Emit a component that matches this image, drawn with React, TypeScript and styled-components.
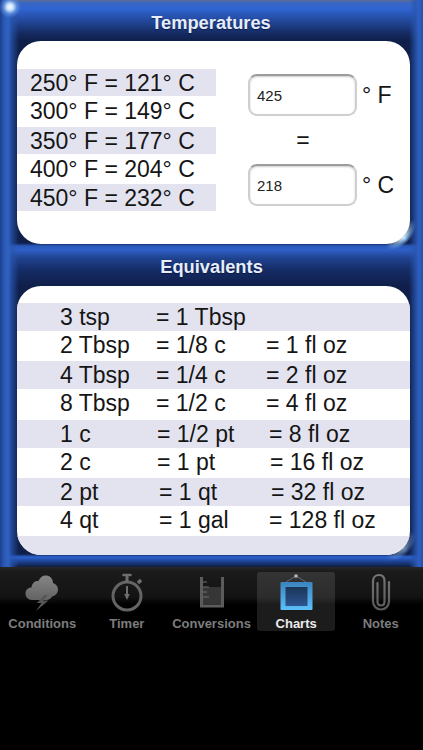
import React from "react";
import styled, {createGlobalStyle} from "styled-components";

const temps = ["250° F = 121° C", "300° F = 149° C", "350° F = 177° C", "400° F = 204° C", "450° F = 232° C"];

const equivalents = [
    {a: "3 tsp", b: "= 1 Tbsp", c: "", second: 96, third: 110},
    {a: "2 Tbsp", b: "= 1/8 c", c: "= 1 fl oz", second: 96, third: 110},
    {a: "4 Tbsp", b: "= 1/4 c", c: "= 2 fl oz", second: 96, third: 110},
    {a: "8 Tbsp", b: "= 1/2 c", c: "= 4 fl oz", second: 96, third: 110},
    {a: "1 c", b: "= 1/2 pt", c: "= 8 fl oz", second: 97, third: 112},
    {a: "2 c", b: "= 1 pt", c: "= 16 fl oz", second: 97, third: 113},
    {a: "2 pt", b: "= 1 qt", c: "= 32 fl oz", second: 99, third: 112},
    {a: "4 qt", b: "= 1 gal", c: "= 128 fl oz", second: 99, third: 110},
];

const ConditionsIcon = () => (
    <svg width="36" height="40" viewBox="0 0 36 40">
        <defs>
            <linearGradient id="cloudFill" x1="0" y1="0" x2="0" y2="1">
                <stop offset="0" stopColor="#868686"/>
                <stop offset="1" stopColor="#636363"/>
            </linearGradient>
        </defs>
        <path fill="url(#cloudFill)" d="M8 28c-4 0-6.500-3-6.500-6.500S4 15.500 7.500 15.500C8 11 11 8.500 14.500 9 16 5 19 3 22.500 3.500c4 .5 6.500 3.500 6.500 7.500 3 .8 5 3.500 5 6.500 0 4-2.800 6.500-6 7-1 2-3 3.500-5.500 3.500z"/>
        <path fill="#565656" d="M20.500 23l-7.500 8h4.500l-5.500 8 12.500-10.500h-5.500l5-5.500z"/>
    </svg>
);

const TimerIcon = () => (
    <svg width="36" height="40" viewBox="0 0 36 40" fill="none">
        <circle cx="18" cy="24" r="14" stroke="#646464" strokeWidth="3"/>
        <path d="M14.500 3h7" stroke="#6e6e6e" strokeWidth="2.500" strokeLinecap="round"/>
        <path d="M18 3v7" stroke="#6e6e6e" strokeWidth="3"/>
        <path d="M29 11l3-3" stroke="#6e6e6e" strokeWidth="3.500"/>
        <path d="M18 14v9" stroke="#6e6e6e" strokeWidth="2"/>
        <path d="M15.200 22h5.600L18 28z" fill="#6e6e6e"/>
    </svg>
);

const BeakerIcon = () => (
    <svg width="30" height="36" viewBox="0 0 30 36" fill="none">
        <path d="M4.500 3v29h21V3" stroke="#5c5c5c" strokeWidth="3"/>
        <path d="M6 13h18v17.500H6z" fill="#363636"/>
        <path d="M6 8h4M6 13h6M6 18h4M6 23h6" stroke="#6e6e6e" strokeWidth="1"/>
    </svg>
);

const FrameIcon = () => (
    <svg width="36" height="40" viewBox="0 0 36 40" fill="none">
        <defs>
            <linearGradient id="frameFill" x1="0" y1="0" x2="0" y2="1">
                <stop offset="0" stopColor="#1b3557"/>
                <stop offset="1" stopColor="#2c5590"/>
            </linearGradient>
            <linearGradient id="frameEdge" x1="0" y1="0" x2="0" y2="1">
                <stop offset="0" stopColor="#3b84bf"/>
                <stop offset="1" stopColor="#5cc0fa"/>
            </linearGradient>
        </defs>
        <path d="M18 4L8 10M18 4l10 6" stroke="#5f6d7c" strokeWidth="1"/>
        <circle cx="18" cy="4" r="1.800" fill="#b8b8b8"/>
        <rect x="2.500" y="10" width="32" height="28" rx="1" fill="url(#frameEdge)"/>
        <rect x="7.500" y="15" width="22" height="19" fill="url(#frameFill)"/>
    </svg>
);

const ClipIcon = () => (
    <svg width="24" height="38" viewBox="0 0 24 38" fill="none">
        <defs>
            <linearGradient id="clipStroke" x1="0" y1="0" x2="0" y2="1">
                <stop offset="0" stopColor="#777"/>
                <stop offset="1" stopColor="#585858"/>
            </linearGradient>
        </defs>
        <path d="M8.500 10v19c0 2.200 1.500 3.500 3.500 3.500s3.500-1.300 3.500-3.500V8c0-3.500-2-6-5.500-6S4 4.500 4 8v20c0 5 3.500 8.500 8 8.500s8-3.500 8-8.500V9" stroke="url(#clipStroke)" strokeWidth="2.200" strokeLinecap="round"/>
    </svg>
);

const tabs = [
    {label: "Conditions", icon: <ConditionsIcon/>},
    {label: "Timer", icon: <TimerIcon/>},
    {label: "Conversions", icon: <BeakerIcon/>},
    {label: "Charts", icon: <FrameIcon/>, active: true},
    {label: "Notes", icon: <ClipIcon/>},
];

export default function App() {
    return (
        <Screen>
            <GlobalStyle/>
            <Frame>
                <Glint/>
                <Section>
                    <SectionTitle>Temperatures</SectionTitle>
                    <TempPanel>
                        <TempList>
                            {temps.map((t) => <TempRow key={t}>{t}</TempRow>)}
                        </TempList>
                        <Converter>
                            <ConvertRow>
                                <TempInput readOnly value="425"/>
                                <Unit>° F</Unit>
                            </ConvertRow>
                            <EqualSign>=</EqualSign>
                            <ConvertRow>
                                <TempInput readOnly value="218"/>
                                <Unit>° C</Unit>
                            </ConvertRow>
                        </Converter>
                    </TempPanel>
                    <CornerGlint/>
                </Section>
                <Section>
                    <SectionTitle>Equivalents</SectionTitle>
                    <EquivPanel>
                        {equivalents.map((e) => (
                            <EquivRow key={e.a} $second={e.second} $third={e.third}>
                                <span>{e.a}</span>
                                <span>{e.b}</span>
                                <span>{e.c}</span>
                            </EquivRow>
                        ))}
                        <EquivFiller/>
                    </EquivPanel>
                    <CornerGlint $dim/>
                </Section>
            </Frame>
            <TabBar>
                {tabs.map((tab) => (
                    <Tab key={tab.label} $active={tab.active}>
                        <TabIcon>{tab.icon}</TabIcon>
                        <TabLabel $active={tab.active}>{tab.label}</TabLabel>
                    </Tab>
                ))}
            </TabBar>
        </Screen>
    );
}

const GlobalStyle = createGlobalStyle`
  html, body {
    margin: 0;
    padding: 0;
    background: #000;
  }
  body {
    font-family: "Liberation Sans", Arial, sans-serif;
  }
`;

const Screen = styled.div`
  width: 423px;
  height: 750px;
  overflow: hidden;
  background: #000;
`;

const Frame = styled.div`
  position: relative;
  height: 567px;
  box-sizing: border-box;
  padding: 0 13px 12px 17px;
  display: flex;
  flex-direction: column;
  background:
    linear-gradient(90deg, #1b3f8c 0, #2a58b4 4px, #3063c2 8px, rgba(40, 85, 175, 0.7) 12px, rgba(20, 45, 105, 0) 19px) left top / 19px 100% no-repeat,
    linear-gradient(270deg, #2450a6 0, #2f60c0 4px, rgba(40, 85, 175, 0.75) 8px, rgba(20, 45, 105, 0) 14px) right top / 14px 100% no-repeat,
    linear-gradient(180deg,
      #5d6d93 0, #3a66c4 3px, #2f64d2 9px, #244a9e 20px, #14295e 34px, #0f1f4a 41px,
      #0f1f4a 243px, #2a59bb 246px, #2e5fc6 250px, #1f4390 258px, #152c66 270px, #0f1f4a 286px,
      #0f1f4a 554px, #2d62d0 557px, #1c3f8c 562px, #0f1c3c 567px);
`;

const Glint = styled.div`
  position: absolute;
  left: 0;
  top: 0;
  width: 22px;
  height: 20px;
  background: radial-gradient(circle at 10px 7px, #f4fbff 0, #cfe6fb 3px, rgba(120, 170, 240, 0.5) 7px, rgba(60, 110, 210, 0) 11px);
`;

const Section = styled.section`
  position: relative;
  display: flex;
  flex-direction: column;
`;

const SectionTitle = styled.h2`
  margin: 0;
  height: 41px;
  line-height: 46px;
  text-align: center;
  font-size: 18.300px;
  font-weight: bold;
  color: #e6edf9;
  text-shadow: 0 1px 1px rgba(5, 15, 45, 0.6);
  transform: translateX(-2.500px);

  section + section > & {
    height: 42px;
    line-height: 45px;
    transform: translateX(-2px);
  }
`;

const CornerGlint = styled.div<{$dim?: boolean}>`
  position: absolute;
  right: -8px;
  bottom: -8px;
  width: 32px;
  height: 32px;
  opacity: ${(p) => (p.$dim ? 0.55 : 1)};
  background: radial-gradient(circle at 0 0, rgba(200, 235, 255, 0) 22px, #e4f6ff 24.500px, #93c6f6 27px, rgba(80, 140, 230, 0) 31px);
  -webkit-mask-image: conic-gradient(from 90deg at 0 0, transparent 0deg, #000 45deg, transparent 90deg);
  mask-image: conic-gradient(from 90deg at 0 0, transparent 0deg, #000 45deg, transparent 90deg);
`;

const TempPanel = styled.div`
  position: relative;
  height: 203px;
  box-sizing: border-box;
  padding-top: 28px;
  display: flex;
  overflow: hidden;
  border-radius: 24px;
  background: #fff;
`;

const TempList = styled.div`
  width: 199px;
  flex: none;
  display: flex;
  flex-direction: column;
`;

const TempRow = styled.div`
  height: 30.400px;
  line-height: 31px;
  padding-left: 13px;
  font-size: 23px;
  color: #151515;

  &:nth-child(odd) {
    height: 27.200px;
    line-height: 28px;
    background: #e3e3f0;
  }
`;

const Converter = styled.div`
  padding: 5px 0 0 32px;
  display: flex;
  flex-direction: column;
`;

const ConvertRow = styled.div`
  display: flex;
  align-items: center;
  gap: 5px;
`;

const TempInput = styled.input`
  width: 109px;
  height: 42px;
  box-sizing: border-box;
  padding: 0 0 0 7px;
  border: 2px solid #cfcfcf;
  border-top-color: #9c9c9c;
  border-radius: 9px;
  outline: none;
  background: #fff;
  box-shadow: inset 0 1px 2px rgba(0, 0, 0, 0.2);
  font-family: inherit;
  font-size: 15px;
  color: #222;
`;

const Unit = styled.span`
  font-size: 23px;
  color: #151515;
  white-space: nowrap;
`;

const EqualSign = styled.div`
  height: 48px;
  width: 110px;
  line-height: 48px;
  text-align: center;
  font-size: 23px;
  color: #151515;
`;

const EquivPanel = styled.div`
  position: relative;
  height: 269px;
  box-sizing: border-box;
  padding-top: 17px;
  display: flex;
  flex-direction: column;
  overflow: hidden;
  border-radius: 24px;
  background: #fff;
`;

const EquivRow = styled.div<{$second: number; $third: number}>`
  height: 30.300px;
  line-height: 29px;
  padding-left: 43px;
  flex: none;
  display: grid;
  grid-template-columns: ${(p) => p.$second}px ${(p) => p.$third}px auto;
  font-size: 23px;
  color: #151515;
  white-space: pre;

  &:nth-child(odd) {
    height: 28px;
    line-height: 28px;
    background: #e3e3f0;
  }
`;

const EquivFiller = styled.div`
  flex: 1;
  background: #e3e3f0;
`;

const TabBar = styled.nav`
  height: 73px;
  box-sizing: border-box;
  padding-top: 5px;
  display: flex;
  background: linear-gradient(180deg, #272727 0, #1b1b1b 4px, #131313 30px, #060606 35px, #000 38px);
`;

const Tab = styled.div<{$active?: boolean}>`
  flex: 1;
  height: 59px;
  margin: 0 3px;
  display: flex;
  flex-direction: column;
  align-items: center;
  border-radius: 3px;
  background: ${(p) => (p.$active ? "rgba(255, 255, 255, 0.11)" : "transparent")};
`;

const TabIcon = styled.div`
  flex: none;
  height: 40px;
  display: flex;
  align-items: center;
  justify-content: center;
  filter: blur(0.500px);
`;

const TabLabel = styled.span<{$active?: boolean}>`
  flex: none;
  margin-top: 4px;
  font-size: 13px;
  line-height: 15px;
  font-weight: bold;
  white-space: nowrap;
  color: ${(p) => (p.$active ? "#ececec" : "#7d7d7d")};
`;
